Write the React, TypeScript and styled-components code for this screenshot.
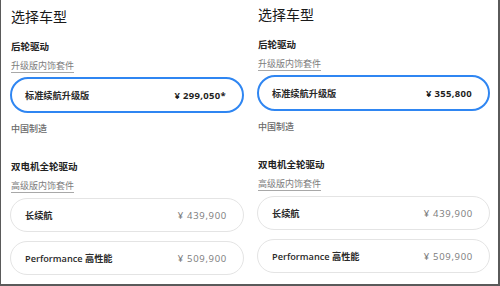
import React from "react";
import styled, { createGlobalStyle } from "styled-components";

const GlobalStyle = createGlobalStyle`
  html, body {
    margin: 0;
    padding: 0;
    background: #fff;
  }
  body {
    font-family: "Open Sans", "Noto Sans CJK SC", sans-serif;
    color: #222;
  }
`;

const Frame = styled.div`
  width: 500px;
  height: 286px;
  box-sizing: border-box;
  border-left: 1px solid #5a5a5a;
  border-right: 2px solid #5a5a5a;
  border-bottom: 2px solid #5a5a5a;
  display: grid;
  grid-template-columns: 248px 1fr;
  background: #fff;
  overflow: hidden;
`;

const Panel = styled.section<{ $top: number; $left: number; $right: number }>`
  display: flex;
  flex-direction: column;
  padding: ${(p) => p.$top}px ${(p) => p.$right}px 0 ${(p) => p.$left}px;
`;

const Title = styled.h2`
  margin: 0 0 0 1px;
  font-size: 14px;
  line-height: 18px;
  font-weight: 400;
  color: #1a1a1a;
`;

const Label = styled.div<{ $gap: number }>`
  margin: ${(p) => p.$gap}px 0 0 1px;
  font-size: 9.5px;
  line-height: 14px;
  font-weight: 600;
  color: #222;
`;

const Link = styled.a`
  align-self: flex-start;
  margin: 5px 0 0 1px;
  font-size: 9px;
  line-height: 14px;
  color: #7c7c7c;
  text-decoration: underline;
  text-decoration-color: #a8a8a8;
  text-underline-offset: 3px;
  text-decoration-thickness: 1px;
`;

const Note = styled.div`
  margin: 9px 0 0 1px;
  font-size: 9px;
  line-height: 14px;
  font-weight: 500;
  color: #6a6a6a;
`;

const Options = styled.div<{ $gap: number }>`
  display: flex;
  flex-direction: column;
  gap: 9px;
  margin-top: ${(p) => p.$gap}px;
`;

const Card = styled.div<{ $selected?: boolean; $h: number }>`
  box-sizing: border-box;
  height: ${(p) => p.$h}px;
  border-radius: 999px;
  display: flex;
  align-items: center;
  justify-content: space-between;
  padding-left: ${(p) => (p.$selected ? 13 : 14)}px;
  padding-right: ${(p) => (p.$selected ? 16 : 16)}px;
  border-style: solid;
  border-width: ${(p) => (p.$selected ? 2 : 1)}px;
  border-color: ${(p) => (p.$selected ? "#2f86f2" : "#e4e4e4")};
  background: #fff;
`;

const Name = styled.span`
  font-size: 9.2px;
  font-weight: 600;
  color: #2a2a2a;
  white-space: nowrap;
`;

const Price = styled.span<{ $selected?: boolean }>`
  font-size: 9.5px;
  font-weight: ${(p) => (p.$selected ? 700 : 400)};
  color: ${(p) => (p.$selected ? "#1e1e1e" : "#7a7a7a")};
  letter-spacing: ${(p) => (p.$selected ? 0.3 : 0.7)}px;
  white-space: nowrap;
`;

type PanelProps = {
  top: number;
  left: number;
  right: number;
  price: string;
};

const ModelPanel = ({ top, left, right, price }: PanelProps) => (
  <Panel $top={top} $left={left} $right={right}>
    <Title>选择车型</Title>
    <Label $gap={14}>后轮驱动</Label>
    <Link>升级版内饰套件</Link>
    <Options $gap={4}>
      <Card $selected $h={36}>
        <Name>标准续航升级版</Name>
        <Price $selected>{price}</Price>
      </Card>
    </Options>
    <Note>中国制造</Note>
    <Label $gap={24}>双电机全轮驱动</Label>
    <Link>高级版内饰套件</Link>
    <Options $gap={5}>
      <Card $h={34}>
        <Name>长续航</Name>
        <Price>¥ 439,900</Price>
      </Card>
      <Card $h={34}>
        <Name>Performance 高性能</Name>
        <Price>¥ 509,900</Price>
      </Card>
    </Options>
  </Panel>
);

export default function App() {
  return (
    <>
      <GlobalStyle />
      <Frame>
        <ModelPanel top={8} left={9} right={5} price="¥ 299,050*" />
        <ModelPanel top={6} left={8} right={8} price="¥ 355,800" />
      </Frame>
    </>
  );
}
